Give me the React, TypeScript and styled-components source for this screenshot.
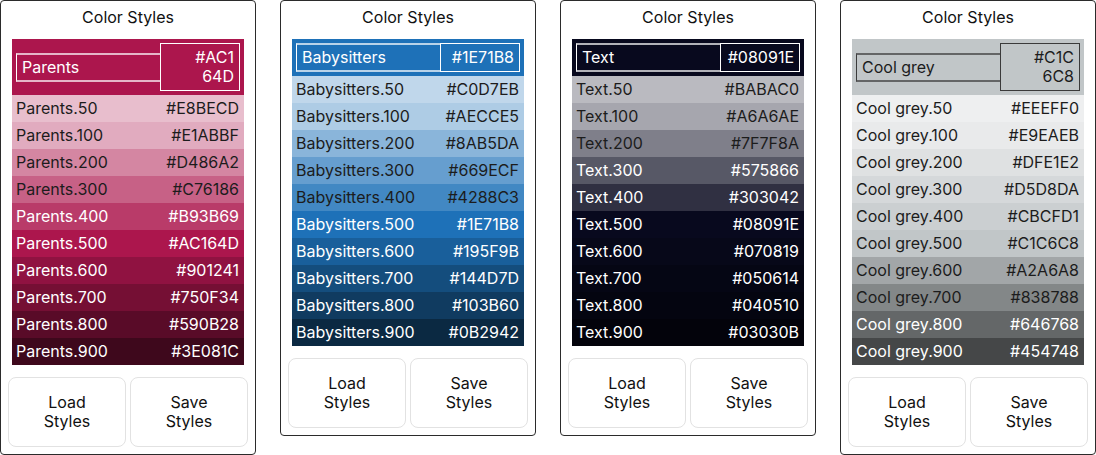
import styled, { createGlobalStyle } from 'styled-components';

const GlobalStyle = createGlobalStyle`
    body {
        margin: 0;
        background: #ffffff;
        font-family: Inter, 'Noto Sans', 'Liberation Sans', sans-serif;
    }
`;

const Page = styled.div`
    display: flex;
    align-items: flex-start;
    gap: 24px;
    width: 1096px;
`;

const Panel = styled.div`
    box-sizing: border-box;
    width: 256px;
    padding: 7px 7px 7px;
    border: 1px solid #2b2b2b;
    border-radius: 4px;
    display: flex;
    flex-direction: column;
`;

const Title = styled.div`
    font-size: 16px;
    line-height: 19px;
    text-align: center;
    color: #111111;
`;

const Swatches = styled.div`
    margin: 12px 4px;
    display: flex;
    flex-direction: column;
`;

const Header = styled.div<{ $bg: string; $fg: string }>`
    display: flex;
    align-items: center;
    padding: 4px;
    background: ${({ $bg }) => $bg};
    color: ${({ $fg }) => $fg};
    font-size: 16px;
    line-height: 19px;
`;

const NameBox = styled.div<{ $line: string }>`
    flex: 1;
    min-width: 0;
    box-sizing: border-box;
    padding: 3px 5px;
    border-left: 1px solid ${({ $line }) => $line};
    border-top: 2px solid ${({ $line }) => $line}b0;
    border-bottom: 2px solid ${({ $line }) => $line}b0;
`;

const HexBox = styled.div<{ $line: string }>`
    box-sizing: border-box;
    width: 80px;
    flex: none;
    padding: 4px 5px;
    border: 1px solid ${({ $line }) => $line};
    text-align: right;
    overflow-wrap: anywhere;
`;

const Row = styled.div<{ $bg: string; $fg: string }>`
    display: flex;
    justify-content: space-between;
    align-items: center;
    height: 27px;
    padding: 0 5px 1px 4px;
    box-sizing: border-box;
    background: ${({ $bg }) => $bg};
    color: ${({ $fg }) => $fg};
    font-size: 16px;
`;

const Actions = styled.div`
    display: grid;
    grid-template-columns: 1fr 1fr;
    gap: 4px;
`;

const ActionButton = styled.button`
    box-sizing: border-box;
    height: 70px;
    padding: 0 8px;
    border: 1px solid #e2e2e2;
    border-radius: 8px;
    background: #ffffff;
    font-family: inherit;
    font-size: 16px;
    line-height: 19px;
    color: #111111;
    text-align: center;
    cursor: pointer;
`;

interface Palette {
    name: string;
    base: string;
    shades: [string, string][];
}

const palettes: Palette[] = [
    {
        name: 'Parents',
        base: '#AC164D',
        shades: [
            ['50', '#E8BECD'],
            ['100', '#E1ABBF'],
            ['200', '#D486A2'],
            ['300', '#C76186'],
            ['400', '#B93B69'],
            ['500', '#AC164D'],
            ['600', '#901241'],
            ['700', '#750F34'],
            ['800', '#590B28'],
            ['900', '#3E081C'],
        ],
    },
    {
        name: 'Babysitters',
        base: '#1E71B8',
        shades: [
            ['50', '#C0D7EB'],
            ['100', '#AECCE5'],
            ['200', '#8AB5DA'],
            ['300', '#669ECF'],
            ['400', '#4288C3'],
            ['500', '#1E71B8'],
            ['600', '#195F9B'],
            ['700', '#144D7D'],
            ['800', '#103B60'],
            ['900', '#0B2942'],
        ],
    },
    {
        name: 'Text',
        base: '#08091E',
        shades: [
            ['50', '#BABAC0'],
            ['100', '#A6A6AE'],
            ['200', '#7F7F8A'],
            ['300', '#575866'],
            ['400', '#303042'],
            ['500', '#08091E'],
            ['600', '#070819'],
            ['700', '#050614'],
            ['800', '#040510'],
            ['900', '#03030B'],
        ],
    },
    {
        name: 'Cool grey',
        base: '#C1C6C8',
        shades: [
            ['50', '#EEEFF0'],
            ['100', '#E9EAEB'],
            ['200', '#DFE1E2'],
            ['300', '#D5D8DA'],
            ['400', '#CBCFD1'],
            ['500', '#C1C6C8'],
            ['600', '#A2A6A8'],
            ['700', '#838788'],
            ['800', '#646768'],
            ['900', '#454748'],
        ],
    },
];

// pick black or white text, whichever contrasts more
const isDark = (hex: string) => {
    const channel = (i: number) => {
        const v = parseInt(hex.slice(i, i + 2), 16) / 255;
        return v <= 0.03928 ? v / 12.92 : Math.pow((v + 0.055) / 1.055, 2.4);
    };
    const lum = 0.2126 * channel(1) + 0.7152 * channel(3) + 0.0722 * channel(5);
    return lum < 0.179;
};

const textOn = (hex: string) => (isDark(hex) ? '#ffffff' : '#1c1c1c');
const lineOn = (hex: string) => (isDark(hex) ? '#ffffff' : '#3a3a3a');

const ColorStylesPanel: React.FC<{ palette: Palette }> = ({ palette }) => (
    <Panel>
        <Title>Color Styles</Title>
        <Swatches>
            <Header $bg={palette.base} $fg={textOn(palette.base)}>
                <NameBox $line={lineOn(palette.base)}>{palette.name}</NameBox>
                <HexBox $line={lineOn(palette.base)}>
                    {palette.base.slice(0, 4)}
                    <wbr />
                    {palette.base.slice(4)}
                </HexBox>
            </Header>
            {palette.shades.map(([step, hex]) => (
                <Row key={step} $bg={hex} $fg={textOn(hex)}>
                    <span>
                        {palette.name}.{step}
                    </span>
                    <span>{hex}</span>
                </Row>
            ))}
        </Swatches>
        <Actions>
            <ActionButton>
                Load
                <br />
                Styles
            </ActionButton>
            <ActionButton>
                Save
                <br />
                Styles
            </ActionButton>
        </Actions>
    </Panel>
);

const App: React.FC = () => (
    <>
        <GlobalStyle />
        <Page>
            {palettes.map((p) => (
                <ColorStylesPanel key={p.name} palette={p} />
            ))}
        </Page>
    </>
);

export default App;
